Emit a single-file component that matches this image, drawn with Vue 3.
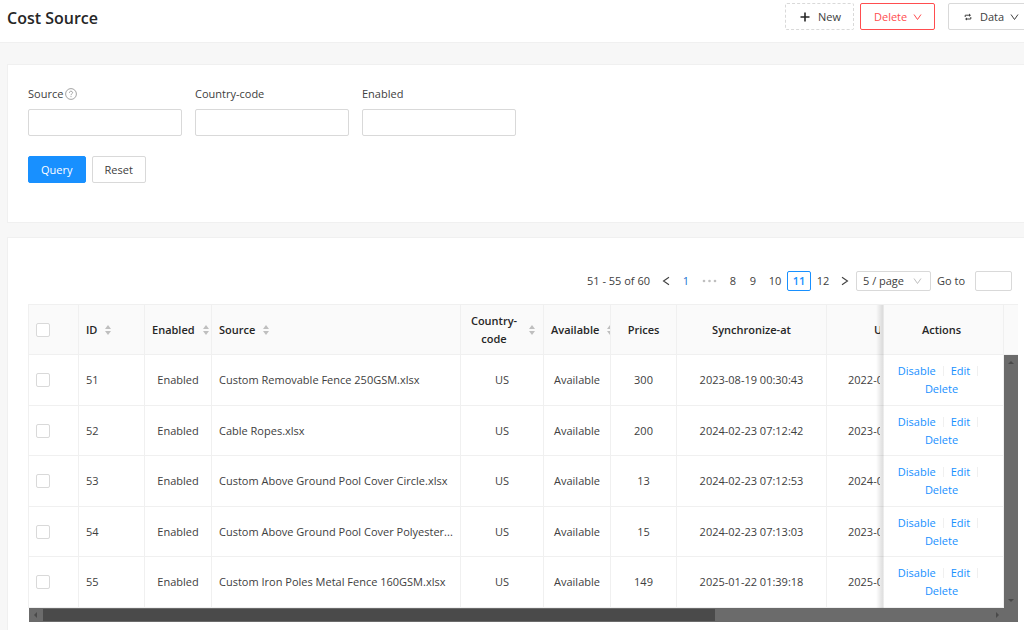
<script setup>
import { ref } from 'vue'

const rows = [
  { id: 51, source: 'Custom Removable Fence 250GSM.xlsx', prices: 300, sync: '2023-08-19 00:30:43', update: '2022-0' },
  { id: 52, source: 'Cable Ropes.xlsx', prices: 200, sync: '2024-02-23 07:12:42', update: '2023-0' },
  { id: 53, source: 'Custom Above Ground Pool Cover Circle.xlsx', prices: 13, sync: '2024-02-23 07:12:53', update: '2024-0' },
  { id: 54, source: 'Custom Above Ground Pool Cover Polyester...', prices: 15, sync: '2024-02-23 07:13:03', update: '2023-0' },
  { id: 55, source: 'Custom Iron Poles Metal Fence 160GSM.xlsx', prices: 149, sync: '2025-01-22 01:39:18', update: '2025-0' }
]
const selected = ref([])
const pages = [8, 9, 10, 11, 12]
const current = ref(11)
const down = 'M1 2.5 4.5 7.5 8 2.5'
</script>

<template>
  <div class="page">
    <header class="top">
      <h1>Cost Source</h1>
      <div class="tools">
        <button type="button" class="btn dashed">
          <svg width="10" height="10" viewBox="0 0 10 10"><path d="M5 0.5v9M0.5 5h9" stroke="#262626" stroke-width="1.6" fill="none" /></svg>
          New
        </button>
        <button type="button" class="btn danger">
          Delete
          <svg width="9" height="10" viewBox="0 0 9 10"><path :d="down" stroke="currentColor" fill="none" /></svg>
        </button>
        <button type="button" class="btn data">
          <svg width="8" height="8" viewBox="0 0 8 8"><path d="M1.2 4V2.2H5.6M6.8 4V6H2.4" stroke="currentColor" fill="none" /><path d="M5 0.6 7 2.2 5 3.8zM3 4.4 1 6 3 7.6z" fill="currentColor" /></svg>
          Data
          <svg class="tail" width="9" height="10" viewBox="0 0 9 10"><path :d="down" stroke="currentColor" fill="none" /></svg>
        </button>
      </div>
    </header>

    <main>
      <form class="card search" @submit.prevent>
        <div class="fields">
          <div class="field">
            <div class="caption">
              <label for="source">Source</label>
              <svg width="12" height="12" viewBox="0 0 12 12" fill="none" stroke="#999"><circle cx="6" cy="6" r="5.4" stroke-width="0.9" /><path d="M4.4 4.8C4.4 2.6 7.6 2.7 7.6 4.7 7.6 5.8 6 5.8 6 7.2M6 8.1v1" stroke-width="0.9" /></svg>
            </div>
            <input id="source" type="text">
          </div>
          <div class="field">
            <div class="caption"><label for="country">Country-code</label></div>
            <input id="country" type="text">
          </div>
          <div class="field">
            <div class="caption"><label for="enabled">Enabled</label></div>
            <input id="enabled" type="text">
          </div>
        </div>
        <div class="buttons">
          <button type="submit" class="btn primary">Query</button>
          <button type="reset" class="btn">Reset</button>
        </div>
      </form>

      <section class="card list">
        <nav class="pager" aria-label="Pagination">
          <span class="total">51 - 55 of 60</span>
          <button type="button" class="arrow" aria-label="Previous page"><svg width="8" height="10" viewBox="0 0 8 10"><path d="M7 1.2 1.5 5 7 8.8" stroke="currentColor" stroke-width="1.1" fill="none" /></svg></button>
          <button type="button" class="num first">1</button>
          <span class="dots"><svg width="15" height="4" viewBox="0 0 15 4" fill="#bfbfbf"><circle cx="2" cy="2" r="1.3" /><circle cx="7.5" cy="2" r="1.3" /><circle cx="13" cy="2" r="1.3" /></svg></span>
          <button v-for="p in pages" :key="p" type="button" class="num" :class="{ active: p === current, wide: p > 9 }" @click="current = p">{{ p }}</button>
          <button type="button" class="arrow" aria-label="Next page"><svg width="8" height="10" viewBox="0 0 8 10"><path d="M1 1.2 6.5 5 1 8.8" stroke="currentColor" stroke-width="1.1" fill="none" /></svg></button>
          <span class="size">
            <select aria-label="Page size"><option>5 / page</option></select>
            <svg width="9" height="10" viewBox="0 0 9 10"><path :d="down" stroke="#bfbfbf" fill="none" /></svg>
          </span>
          <label for="goto">Go to</label>
          <input id="goto" type="text">
        </nav>

        <div class="frame">
          <div class="scroller">
            <table>
              <colgroup>
                <col class="w-check"><col class="w-id"><col class="w-enabled"><col class="w-source"><col class="w-country">
                <col class="w-avail"><col class="w-prices"><col class="w-date"><col class="w-update"><col class="w-act">
              </colgroup>
              <thead>
                <tr>
                  <th class="left"><input type="checkbox" aria-label="Select all"></th>
                  <th class="left"><span class="sort">ID<i class="carets" /></span></th>
                  <th class="left"><span class="sort">Enabled<i class="carets" /></span></th>
                  <th class="left"><span class="sort">Source<i class="carets" /></span></th>
                  <th><span class="sort spread"><span>Country-code</span><i class="carets" /></span></th>
                  <th class="left"><span class="sort">Available<i class="carets" /></span></th>
                  <th>Prices</th>
                  <th>Synchronize-at</th>
                  <th class="update">U</th>
                  <th class="fixed">Actions</th>
                </tr>
              </thead>
              <tbody>
                <tr v-for="r in rows" :key="r.id">
                  <td class="left"><input v-model="selected" type="checkbox" :value="r.id" :aria-label="'Select ' + r.id"></td>
                  <td class="left">{{ r.id }}</td>
                  <td>Enabled</td>
                  <td class="left">{{ r.source }}</td>
                  <td>US</td>
                  <td>Available</td>
                  <td>{{ r.prices }}</td>
                  <td>{{ r.sync }}</td>
                  <td class="update">{{ r.update }}</td>
                  <td class="fixed">
                    <div class="acts">
                      <a href="#">Disable</a><i class="bar" /><a href="#">Edit</a><i class="bar" /><a href="#">Delete</a>
                    </div>
                  </td>
                </tr>
              </tbody>
            </table>
          </div>
          <div class="side">
            <div class="cap" />
            <div class="vbar"><i class="tri up" /><i class="tri dn" /></div>
          </div>
          <div class="hbar">
            <i class="tri lt" />
            <div class="track"><div class="thumb" /></div>
            <i class="tri rt" />
          </div>
        </div>
      </section>
    </main>
  </div>
</template>

<style>
body {
  background: #f7f7f7;
  overflow: hidden;
}
</style>

<style scoped>
* {
  box-sizing: border-box;
}
.page {
  font-family: "Open Sans", "Noto Sans", sans-serif;
  font-size: 11px;
  line-height: 18px;
  color: #404040;
}
button, input, select {
  font: inherit;
  color: inherit;
  margin: 0;
}
svg {
  flex: none;
}
.top {
  display: flex;
  justify-content: space-between;
  height: 43px;
  padding: 3px 0 0 7px;
  background: #fff;
  border-bottom: 1px solid #f0f0f0;
  overflow: hidden;
}
h1 {
  margin: 0;
  font-size: 16px;
  line-height: 30px;
  font-weight: 600;
  color: #262626;
}
.tools {
  display: flex;
  margin-right: -8px;
}
.btn {
  display: flex;
  align-items: center;
  height: 27px;
  padding: 0 13px;
  background: #fff;
  border: 1px solid #d9d9d9;
  border-radius: 2px;
  white-space: nowrap;
}
.dashed {
  width: 69px;
  border-style: dashed;
  gap: 8px;
  padding: 0 0 0 14px;
  margin-right: 6px;
}
.danger {
  width: 75px;
  padding-right: 12px;
  color: #ff4d4f;
  border-color: #ff4d4f;
  justify-content: space-between;
}
.data {
  width: 84px;
  margin-left: 13px;
  padding: 0 0 0 15px;
  gap: 8px;
}
.tail {
  margin-left: -2px;
}
main {
  display: grid;
  gap: 14px;
  padding: 21px 0 0 7px;
}
.card {
  min-width: 0;
  background: #fff;
  border: 1px solid #f0f0f0;
  border-right: 0;
}
.search {
  padding: 20px 20px 39px;
}
.fields {
  display: flex;
  gap: 13px;
}
.field {
  width: 154px;
}
.caption {
  display: flex;
  align-items: center;
  gap: 2px;
  height: 18px;
  margin-bottom: 6px;
}
input[type="text"] {
  display: block;
  width: 100%;
  height: 27px;
  border: 1px solid #d9d9d9;
  border-radius: 2px;
  background: #fff;
}
.buttons {
  display: flex;
  gap: 6px;
  margin-top: 20px;
}
.buttons .btn {
  padding: 0 12px;
}
.buttons .primary {
  background: #1890ff;
  border-color: #1890ff;
  color: #fff;
}
.list {
  padding: 33px 6px 24px 20px;
}
.pager {
  display: flex;
  justify-content: flex-end;
  align-items: center;
  height: 20px;
  margin: 0 6px 13px 0;
}
.pager button {
  height: 20px;
  padding: 0;
  border: 1px solid transparent;
  border-radius: 2px;
  background: none;
}
.total {
  margin-right: 6px;
}
.pager .arrow {
  display: grid;
  place-items: center;
  width: 20px;
}
.pager .num {
  width: 20px;
}
.pager .num.wide {
  width: 24px;
}
.pager .first {
  color: #1870d0;
}
.dots {
  display: grid;
  place-items: center;
  width: 27px;
}
.pager .active {
  border-color: #1890ff;
  color: #1890ff;
  font-weight: 600;
}
.size {
  display: grid;
  align-items: center;
  width: 75px;
  margin: 0 6px 0 1px;
}
.size select {
  grid-area: 1 / 1;
  width: 100%;
  height: 20px;
  padding: 0 6px;
  border: 1px solid #d9d9d9;
  border-radius: 2px;
  background: #fff;
  appearance: none;
}
.size svg {
  grid-area: 1 / 1;
  justify-self: end;
  margin-right: 9px;
  pointer-events: none;
}
.pager input[type="text"] {
  width: 37px;
  height: 20px;
  margin-left: 10px;
}
.frame {
  display: grid;
  grid-template-columns: minmax(0, 1fr) 14px;
}
.scroller {
  overflow: hidden;
  border-left: 1px solid #f0f0f0;
}
table {
  width: 100%;
  min-width: 972px;
  table-layout: fixed;
  border-collapse: separate;
  border-spacing: 0;
}
.w-check { width: 50px; }
.w-id { width: 66px; }
.w-enabled { width: 67px; }
.w-source { width: 249px; }
.w-country { width: 83px; }
.w-avail { width: 67px; }
.w-prices { width: 66px; }
.w-date { width: 150px; }
.w-update { width: 53px; }
.w-act { width: 124px; }
th, td {
  padding: 0 6px;
  border-right: 1px solid #f0f0f0;
  border-bottom: 1px solid #f0f0f0;
  background: #fff;
  text-align: center;
  white-space: nowrap;
  overflow: hidden;
}
th {
  height: 51px;
  background: #fafafa;
  border-top: 1px solid #f0f0f0;
  color: #262626;
  font-weight: 600;
}
td {
  height: 50px;
}
tr:nth-child(odd) td {
  height: 51px;
}
.left {
  text-align: left;
  padding-left: 7px;
}
td.left {
  padding-right: 0;
}
.update {
  padding: 0 0 0 21px;
  border-right: 0;
  text-align: left;
}
th.update {
  padding-left: 47px;
}
.sort {
  display: flex;
  align-items: center;
  gap: 8px;
}
.spread {
  white-space: normal;
  padding-right: 2px;
}
.spread span {
  flex: 1;
}
.carets {
  flex: none;
  display: grid;
  gap: 2px;
}
.carets::before, .carets::after {
  content: "";
  border: 3px solid transparent;
}
.carets::before {
  border-top: 0;
  border-bottom: 4px solid #bfbfbf;
}
.carets::after {
  border-bottom: 0;
  border-top: 4px solid #bfbfbf;
}
input[type="checkbox"] {
  display: block;
  appearance: none;
  width: 14px;
  height: 14px;
  border: 1px solid #d9d9d9;
  border-radius: 2px;
  background: #fff;
}
input[type="checkbox"]:checked {
  background: #1890ff;
}
.fixed {
  position: sticky;
  right: 0;
  overflow: visible;
}
/* Shadow along the edge of the pinned column */
.fixed::before {
  content: "";
  position: absolute;
  top: 0;
  bottom: -1px;
  left: -4px;
  width: 8px;
  background: linear-gradient(to right, rgba(0, 0, 0, 0), rgba(0, 0, 0, 0.12) 80%, rgba(0, 0, 0, 0.05));
}
.acts {
  display: flex;
  flex-wrap: wrap;
  justify-content: center;
}
.acts a {
  color: #1890ff;
  text-decoration: none;
}
.bar {
  width: 1px;
  height: 10px;
  margin: 4px 7px;
  background: #f0f0f0;
}
.side {
  display: flex;
  flex-direction: column;
}
.cap {
  height: 51px;
  background: #fafafa;
  border-top: 1px solid #f0f0f0;
  border-bottom: 1px solid #f0f0f0;
}
.vbar {
  flex: 1;
  display: flex;
  flex-direction: column;
  justify-content: space-between;
  align-items: center;
  padding: 6px 0;
  background: #6b6b6b;
}
.hbar {
  grid-column: 1 / -1;
  display: flex;
  align-items: center;
  height: 14px;
  margin-left: 1px;
  padding: 0 19px 0 5px;
  gap: 6px;
  background: #6b6b6b;
}
.track {
  flex: 1;
}
.thumb {
  width: 71%;
  height: 12px;
  background: #4a4a4a;
}
.tri {
  border: 3px solid transparent;
}
.up { border-top: 0; border-bottom-color: #4a4a4a; }
.dn { border-bottom: 0; border-top-color: #4a4a4a; }
.lt { border-left: 0; border-right-color: #4a4a4a; }
.rt { border-right: 0; border-left-color: #4a4a4a; }
</style>
